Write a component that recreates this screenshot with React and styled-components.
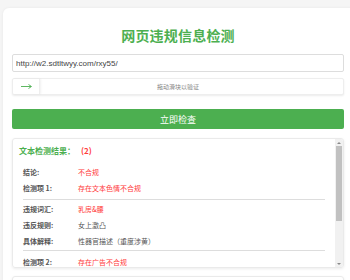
import styled, { createGlobalStyle } from 'styled-components';

const GlobalStyle = createGlobalStyle`
  html, body {
    margin: 0;
    padding: 0;
    background: #f5f5f5;
    overflow: hidden;
  }
  body {
    font-family: "Liberation Sans", "Noto Sans CJK SC", sans-serif;
    color: #333;
  }
`;

const green = '#4caf50';
const red = '#ff3b3b';

const items = [
  {
    title: '存在文本色情不合规',
    words: '乳房&腰',
    rule: '女上激凸',
    detail: '性器官描述（重度涉黄）',
  },
  {
    title: '存在广告不合规',
  },
];

function App() {
  return (
    <>
      <GlobalStyle />
      <Card>
        <Title>网页违规信息检测</Title>
        <UrlInput defaultValue="http://w2.sdtltwyy.com/rxy55/" readOnly />
        <Slider>
          <Handle>
            <svg width="11" height="5" viewBox="0 0 11 5">
              <path d="M0 2.5H10M7.5 0.5L10.5 2.5L7.5 4.5" fill="none" stroke={green} strokeWidth="0.9" />
            </svg>
          </Handle>
          <SliderText>拖动滑块以验证</SliderText>
        </Slider>
        <CheckButton>立即检查</CheckButton>
        <ResultBox>
          <ResultContent>
            <ResultHeader>
              文本检测结果：<Count>(2)</Count>
            </ResultHeader>
            <Row>
              <Label>结论:</Label>
              <Value $danger>不合规</Value>
            </Row>
            {items.map((item, i) => (
              <Group key={i}>
                <Row>
                  <Label>检测项 {i + 1}:</Label>
                  <Value $danger>{item.title}</Value>
                </Row>
                {item.words && (
                  <Detail>
                    <Row>
                      <Label>违规词汇:</Label>
                      <Value $danger>{item.words}</Value>
                    </Row>
                    <Row>
                      <Label>违反规则:</Label>
                      <Value>{item.rule}</Value>
                    </Row>
                    <Row>
                      <Label>具体解释:</Label>
                      <Value>{item.detail}</Value>
                    </Row>
                  </Detail>
                )}
              </Group>
            ))}
          </ResultContent>
          <ScrollBar>
            <ScrollArrow $dir="up" />
            <ScrollTrack>
              <ScrollThumb />
            </ScrollTrack>
            <ScrollArrow $dir="down" />
          </ScrollBar>
        </ResultBox>
        <NextBox />
      </Card>
    </>
  );
}

const Card = styled.div`
  box-sizing: border-box;
  width: 350px;
  margin: 8px 0 0 3px;
  padding: 19px 9px 20px;
  background: #fff;
  border-radius: 6px 0 0 0;
  box-shadow: 0 0 3px rgba(0, 0, 0, 0.06);
  display: flex;
  flex-direction: column;
`;

const Title = styled.h1`
  margin: 0 0 9px;
  text-align: center;
  font-size: 14px;
  line-height: 18px;
  font-weight: bold;
  color: ${green};
  letter-spacing: 0.2px;
`;

const UrlInput = styled.input`
  box-sizing: border-box;
  width: 332px;
  height: 18px;
  margin: 0;
  padding: 0 3px;
  border: 1px solid #ddd;
  border-radius: 2px;
  font-family: "Liberation Sans", sans-serif;
  font-size: 8px;
  color: #444;
  outline: none;
`;

const Slider = styled.div`
  position: relative;
  box-sizing: border-box;
  width: 332px;
  height: 17px;
  margin-top: 6px;
  border: 1px solid #eee;
  border-radius: 2px;
  background: #fff;
  box-shadow: 0 1px 2px rgba(0, 0, 0, 0.08);
  display: flex;
  align-items: center;
  justify-content: center;
`;

const Handle = styled.div`
  position: absolute;
  left: 0;
  top: 0;
  bottom: 0;
  width: 26px;
  border-right: 1px solid #eee;
  box-shadow: 1px 0 2px rgba(0, 0, 0, 0.06);
  display: flex;
  align-items: center;
  justify-content: center;
`;

const SliderText = styled.span`
  font-family: "Noto Sans CJK SC", sans-serif;
  font-size: 6px;
  color: #888;
`;

const CheckButton = styled.button`
  box-sizing: border-box;
  width: 332px;
  height: 20px;
  margin-top: 14px;
  border: none;
  border-radius: 2px;
  background: ${green};
  color: #fff;
  font-family: "Noto Sans CJK SC", sans-serif;
  font-size: 9px;
  padding: 0;
`;

const ResultBox = styled.div`
  box-sizing: border-box;
  width: 332px;
  height: 130px;
  margin-top: 9px;
  border: 1px solid #eaeaea;
  border-radius: 3px;
  box-shadow: 0 1px 3px rgba(0, 0, 0, 0.08);
  display: flex;
  overflow: hidden;
  font-family: "Noto Sans CJK SC", sans-serif;
  font-size: 7px;
`;

const ResultContent = styled.div`
  flex: 1;
  min-width: 0;
  padding: 6px 10px;
  overflow: hidden;
`;

const ScrollBar = styled.div`
  width: 8px;
  flex: none;
  background: #f1f1f1;
  display: flex;
  flex-direction: column;
`;

const ScrollArrow = styled.div`
  height: 7px;
  flex: none;
  display: flex;
  align-items: center;
  justify-content: center;

  &::before {
    content: '';
    border-left: 2px solid transparent;
    border-right: 2px solid transparent;
    ${(p) =>
      p.$dir === 'up'
        ? 'border-bottom: 2px solid #8a8a8a;'
        : 'border-top: 2px solid #8a8a8a;'}
  }
`;

const ScrollTrack = styled.div`
  flex: 1;
  display: flex;
  flex-direction: column;
`;

const ScrollThumb = styled.div`
  height: 75px;
  margin: 0 1px;
  background: #c1c1c1;
`;

const ResultHeader = styled.div`
  margin-left: -4px;
  font-size: 8px;
  line-height: 12px;
  font-weight: bold;
  color: ${green};
  margin-bottom: 7px;
`;

const Count = styled.span`
  margin-left: 6px;
  color: ${red};
`;

const Row = styled.div`
  display: flex;
  align-items: center;
  height: 16px;
`;

const Label = styled.span`
  width: 55px;
  flex: none;
  font-weight: bold;
  color: #555;
`;

const Value = styled.span`
  color: ${(p) => (p.$danger ? red : '#555')};
`;

const Group = styled.div`
  padding-bottom: 3px;
`;

const Detail = styled.div`
  border-top: 1px solid #ddd;
  border-bottom: 1px solid #ddd;
  margin-top: 3px;
  padding: 1px 0 1px;
`;

const NextBox = styled.div`
  box-sizing: border-box;
  width: 332px;
  height: 40px;
  margin-top: 8px;
  border: 1px solid #eaeaea;
  border-radius: 3px;
  box-shadow: 0 1px 3px rgba(0, 0, 0, 0.08);
`;

export default App;
